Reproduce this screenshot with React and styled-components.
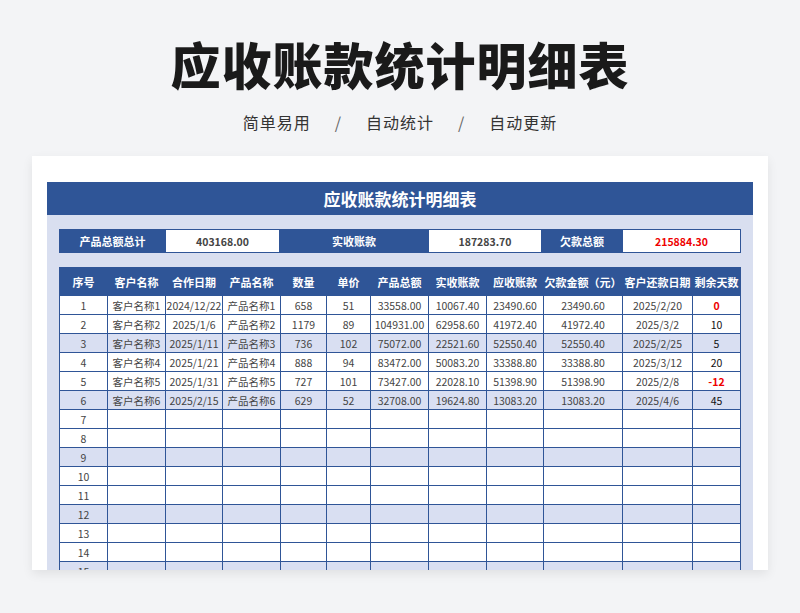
import React from 'react';
import styled, { createGlobalStyle } from 'styled-components';

const Global = createGlobalStyle`
  body { margin: 0; background: #f3f4f6; font-family: "Noto Sans CJK SC", "Noto Sans", sans-serif; }
`;

const Page = styled.div`
  width: 800px;
  height: 613px;
  overflow: hidden;
  display: flex;
  flex-direction: column;
  align-items: center;
`;

const Title = styled.h1`
  margin: 28px 0 0;
  font-size: 50px;
  line-height: 70px;
  font-weight: 900;
  color: #1a1a1a;
  letter-spacing: 1px;
`;

const Sub = styled.div`
  margin-top: 12px;
  font-size: 16px;
  color: #333;
  display: flex;
  gap: 24px;
  letter-spacing: 1px;
  span.sep { color: #666; }
`;

const Card = styled.div`
  margin-top: 22px;
  width: 736px;
  height: 414px;
  background: #fff;
  box-shadow: 0 4px 10px rgba(0,0,0,0.08);
  padding: 26px 15px 0;
  box-sizing: border-box;
  overflow: hidden;
`;

const Sheet = styled.div`
  background: #d9dff0;
  padding-bottom: 20px;
`;

const SheetTitle = styled.div`
  background: #2f5597;
  color: #fff;
  height: 33px;
  line-height: 33px;
  text-align: center;
  font-size: 17px;
  font-weight: 700;
`;

const Grid = styled.div`
  margin: 0 12px;
  display: grid;
  grid-template-columns: ${p => p.cols};
  border-top: 1px solid #2f5597;
  border-left: 1px solid #2f5597;
`;

const Cell = styled.div`
  border-right: 1px solid #2f5597;
  border-bottom: 1px solid #2f5597;
  height: ${p => p.h}px;
  display: flex;
  align-items: center;
  justify-content: center;
  font-size: ${p => p.head ? 11 : 10.5}px;
  font-weight: ${p => p.head || p.bold ? 700 : 400};
  color: ${p => p.head ? '#fff' : p.red ? '#e00' : '#444'};
  background: ${p => p.head ? '#2f5597' : p.alt ? '#d9dff2' : '#fff'};
  white-space: nowrap;
  overflow: hidden;
`;

const Summary = styled(Grid)`
  margin-top: 14px;
  margin-bottom: 14px;
`;

const cols = '48px 58px 57px 58px 46px 44px 58px 58px 57px 79px 70px 48px';
const heads = ['序号','客户名称','合作日期','产品名称','数量','单价','产品总额','实收账款','应收账款','欠款金额（元）','客户还款日期','剩余天数'];
const data = [
  ['客户名称1','2024/12/22','产品名称1','658','51','33558.00','10067.40','23490.60','23490.60','2025/2/20','0'],
  ['客户名称2','2025/1/6','产品名称2','1179','89','104931.00','62958.60','41972.40','41972.40','2025/3/2','10'],
  ['客户名称3','2025/1/11','产品名称3','736','102','75072.00','22521.60','52550.40','52550.40','2025/2/25','5'],
  ['客户名称4','2025/1/21','产品名称4','888','94','83472.00','50083.20','33388.80','33388.80','2025/3/12','20'],
  ['客户名称5','2025/1/31','产品名称5','727','101','73427.00','22028.10','51398.90','51398.90','2025/2/8','-12'],
  ['客户名称6','2025/2/15','产品名称6','629','52','32708.00','19624.80','13083.20','13083.20','2025/4/6','45'],
];

export default function App() {
  const rows = [];
  for (let i = 1; i <= 15; i++) rows.push(i);
  return (
    <Page>
      <Global />
      <Title>应收账款统计明细表</Title>
      <Sub><span>简单易用</span><span className="sep">/</span><span>自动统计</span><span className="sep">/</span><span>自动更新</span></Sub>
      <Card>
        <Sheet>
          <SheetTitle>应收账款统计明细表</SheetTitle>
          <Summary cols="106px 114px 149px 113px 81px 118px">
            <Cell h={22} head>产品总额总计</Cell>
            <Cell h={22} bold>403168.00</Cell>
            <Cell h={22} head>实收账款</Cell>
            <Cell h={22} bold>187283.70</Cell>
            <Cell h={22} head>欠款总额</Cell>
            <Cell h={22} bold red>215884.30</Cell>
          </Summary>
          <Grid cols={cols}>
            {heads.map(h => <Cell key={h} h={27} head>{h}</Cell>)}
            {rows.map(n => {
              const d = data[n - 1] || Array(11).fill('');
              const alt = n % 3 === 0;
              return [
                <Cell key={n + 'n'} h={18} alt={alt}>{n}</Cell>,
                ...d.map((v, j) => {
                  const last = j === 10;
                  const red = last && (v === '0' || v.startsWith('-'));
                  return (
                    <Cell key={n + '-' + j} h={18} alt={alt} red={red} bold={red}
                      style={last ? { color: red ? '#e00' : '#111' } : undefined}>{v}</Cell>
                  );
                })
              ];
            })}
          </Grid>
        </Sheet>
      </Card>
    </Page>
  );
}
